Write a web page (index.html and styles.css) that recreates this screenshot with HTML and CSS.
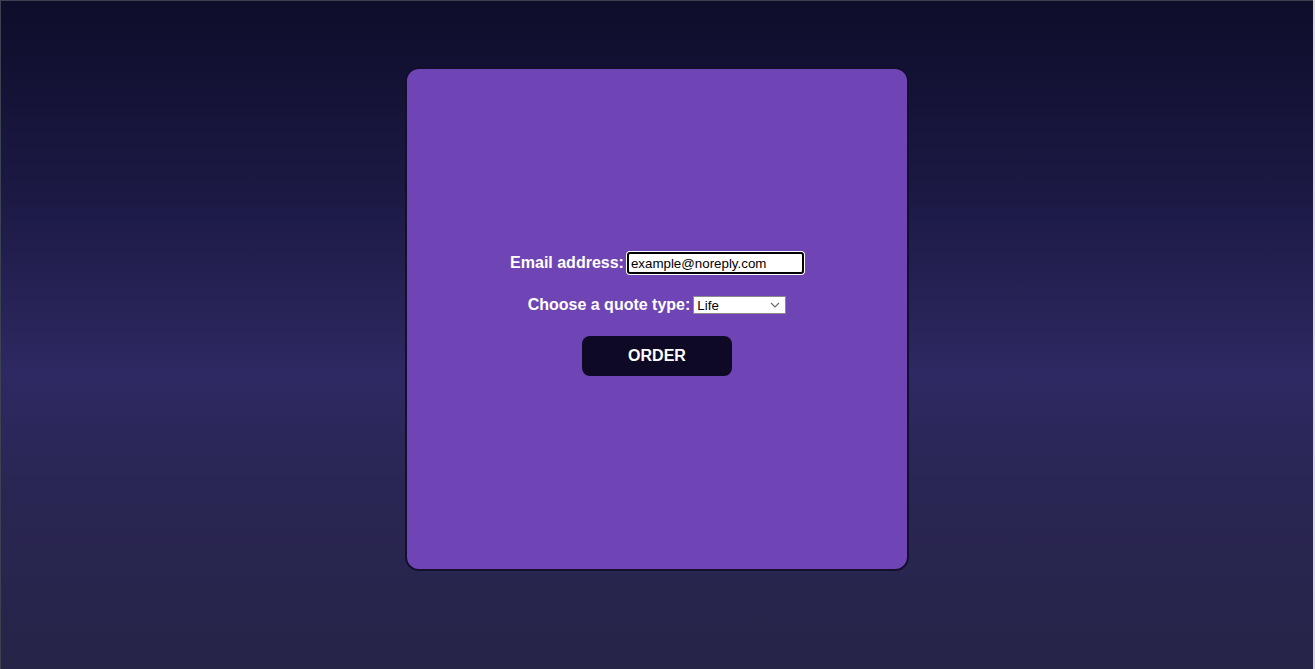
FILE: index.html
```html
<!DOCTYPE html>
<html lang="en">
<head>
<meta charset="utf-8">
<title>Quote</title>
<link rel="stylesheet" href="styles.css">
</head>
<body>
<main class="page">
  <section class="card">
    <form class="quote-form">
      <div class="row row-email">
        <label class="label" for="email">Email address:</label>
        <input class="email" id="email" type="text" value="example@noreply.com">
      </div>
      <div class="row row-type">
        <label class="label" for="type">Choose a quote type:</label>
        <span class="select">
          <span class="select-value">Life</span>
          <svg class="chev" width="10" height="6" viewBox="0 0 10 6"><path d="M1 1l4 4 4-4" fill="none" stroke="#6b6b6b" stroke-width="1.2"/></svg>
        </span>
      </div>
      <button class="order" type="button">ORDER</button>
    </form>
  </section>
</main>
</body>
</html>
```

FILE: styles.css
```css
* { box-sizing: border-box; }
html, body { margin: 0; padding: 0; }
body {
  height: 100vh;
  font-family: "Liberation Sans", Arial, sans-serif;
  background: #d9d9d9;
}
.page {
  height: 669px;
  width: 1313px;
  border-top: 1px solid #3d4250;
  border-left: 1px solid #3d4250;
  background: linear-gradient(to bottom, #0e0d2a 0%, #1c1a45 30%, #2e2962 56%, #2a2655 70%, #262447 100%);
  padding-top: 66px;
  display: flex;
  flex-direction: column;
  align-items: center;
}
.card {
  width: 504px;
  height: 504px;
  background: #6f45b5;
  border: 2px solid #150e2e;
  border-radius: 14px;
  display: flex;
  align-items: center;
  justify-content: center;
}
.quote-form {
  display: flex;
  flex-direction: column;
  align-items: center;
  margin-top: -10px;
}
.row {
  display: flex;
  align-items: center;
  gap: 3px;
  color: #fff;
}
.label {
  font-weight: bold;
  font-size: 16px;
  color: #fff;
}
.email {
  width: 177px;
  height: 22px;
  border: 2px solid #000;
  border-radius: 3px;
  box-shadow: 0 0 0 1px #fff;
  padding: 0 2px;
  font-family: "Liberation Sans", Arial, sans-serif;
  font-size: 13.33px;
  color: #000;
  background: #fff;
  outline: none;
}
.row-type { margin-top: 22px; }
.select {
  width: 93px;
  height: 18px;
  border: 1px solid #8a8a8a;
  background: #fff;
  display: flex;
  align-items: center;
  justify-content: space-between;
  padding: 0 5px 0 3px;
  font-size: 13.33px;
  color: #000;
}
.chev { display: block; }
.order {
  margin-top: 22px;
  width: 150px;
  height: 40px;
  border: none;
  border-radius: 8px;
  background: #0e0a26;
  color: #fff;
  font-family: "Liberation Sans", Arial, sans-serif;
  font-weight: bold;
  font-size: 16px;
}
```
